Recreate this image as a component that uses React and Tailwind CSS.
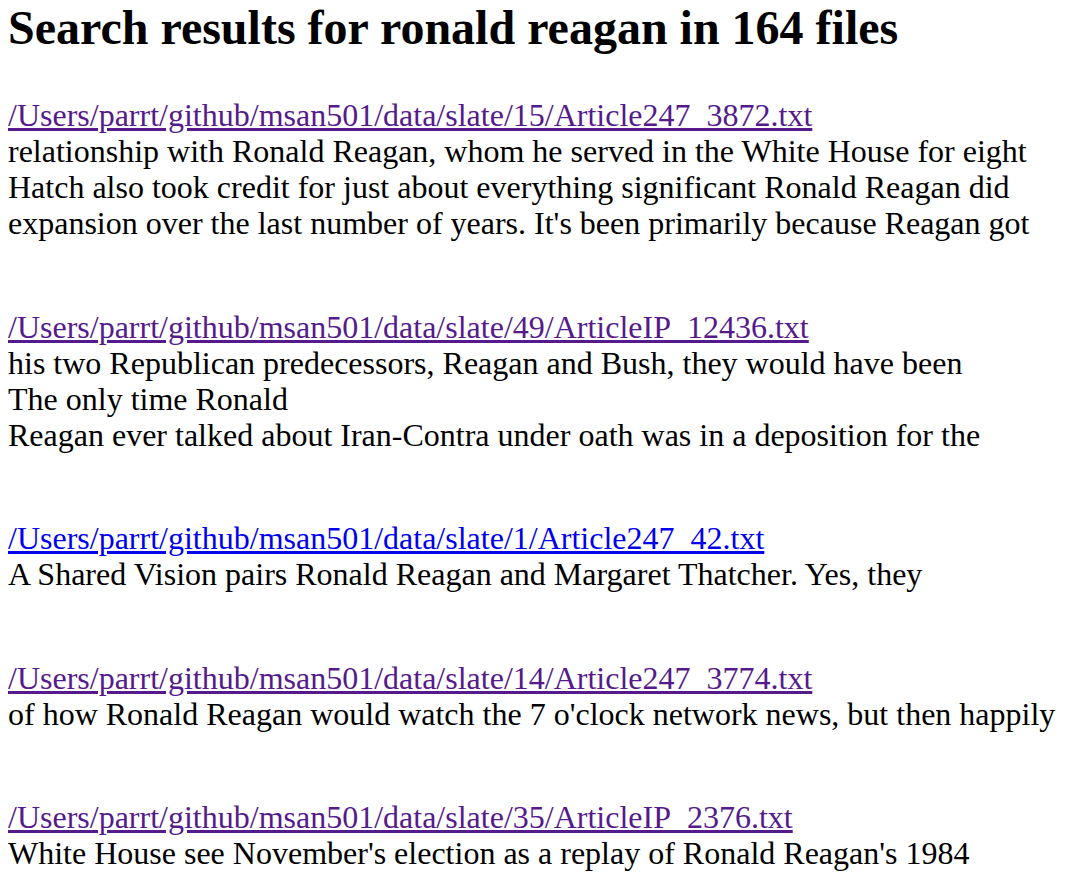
import React from 'react';

const results = [
  {
    path: '/Users/parrt/github/msan501/data/slate/15/Article247_3872.txt',
    visited: true,
    lines: [
      'relationship with Ronald Reagan, whom he served in the White House for eight',
      'Hatch also took credit for just about everything significant Ronald Reagan did',
      "expansion over the last number of years. It's been primarily because Reagan got",
    ],
  },
  {
    path: '/Users/parrt/github/msan501/data/slate/49/ArticleIP_12436.txt',
    visited: true,
    lines: [
      'his two Republican predecessors, Reagan and Bush, they would have been',
      'The only time Ronald',
      'Reagan ever talked about Iran-Contra under oath was in a deposition for the',
    ],
  },
  {
    path: '/Users/parrt/github/msan501/data/slate/1/Article247_42.txt',
    visited: false,
    lines: ['A Shared Vision pairs Ronald Reagan and Margaret Thatcher. Yes, they'],
  },
  {
    path: '/Users/parrt/github/msan501/data/slate/14/Article247_3774.txt',
    visited: true,
    lines: ["of how Ronald Reagan would watch the 7 o'clock network news, but then happily"],
  },
  {
    path: '/Users/parrt/github/msan501/data/slate/35/ArticleIP_2376.txt',
    visited: true,
    lines: ["White House see November's election as a replay of Ronald Reagan's 1984"],
  },
];

export default function App() {
  return (
    <div className="min-h-screen bg-white px-2 text-black font-['Liberation_Serif',serif] text-[32px] leading-[36px]">
      <h1 className="text-[48px] leading-[56px] font-bold">
        Search results for ronald reagan in 164 files
      </h1>
      <div className="mt-[41px] flex flex-col gap-[67.5px]">
        {results.map((r) => (
          <div key={r.path}>
            <a
              href="#"
              className={`underline ${r.visited ? 'text-[#551a8b]' : 'text-[#0000ee]'}`}
            >
              {r.path}
            </a>
            {r.lines.map((l, i) => (
              <div key={i}>{l}</div>
            ))}
          </div>
        ))}
      </div>
    </div>
  );
}
